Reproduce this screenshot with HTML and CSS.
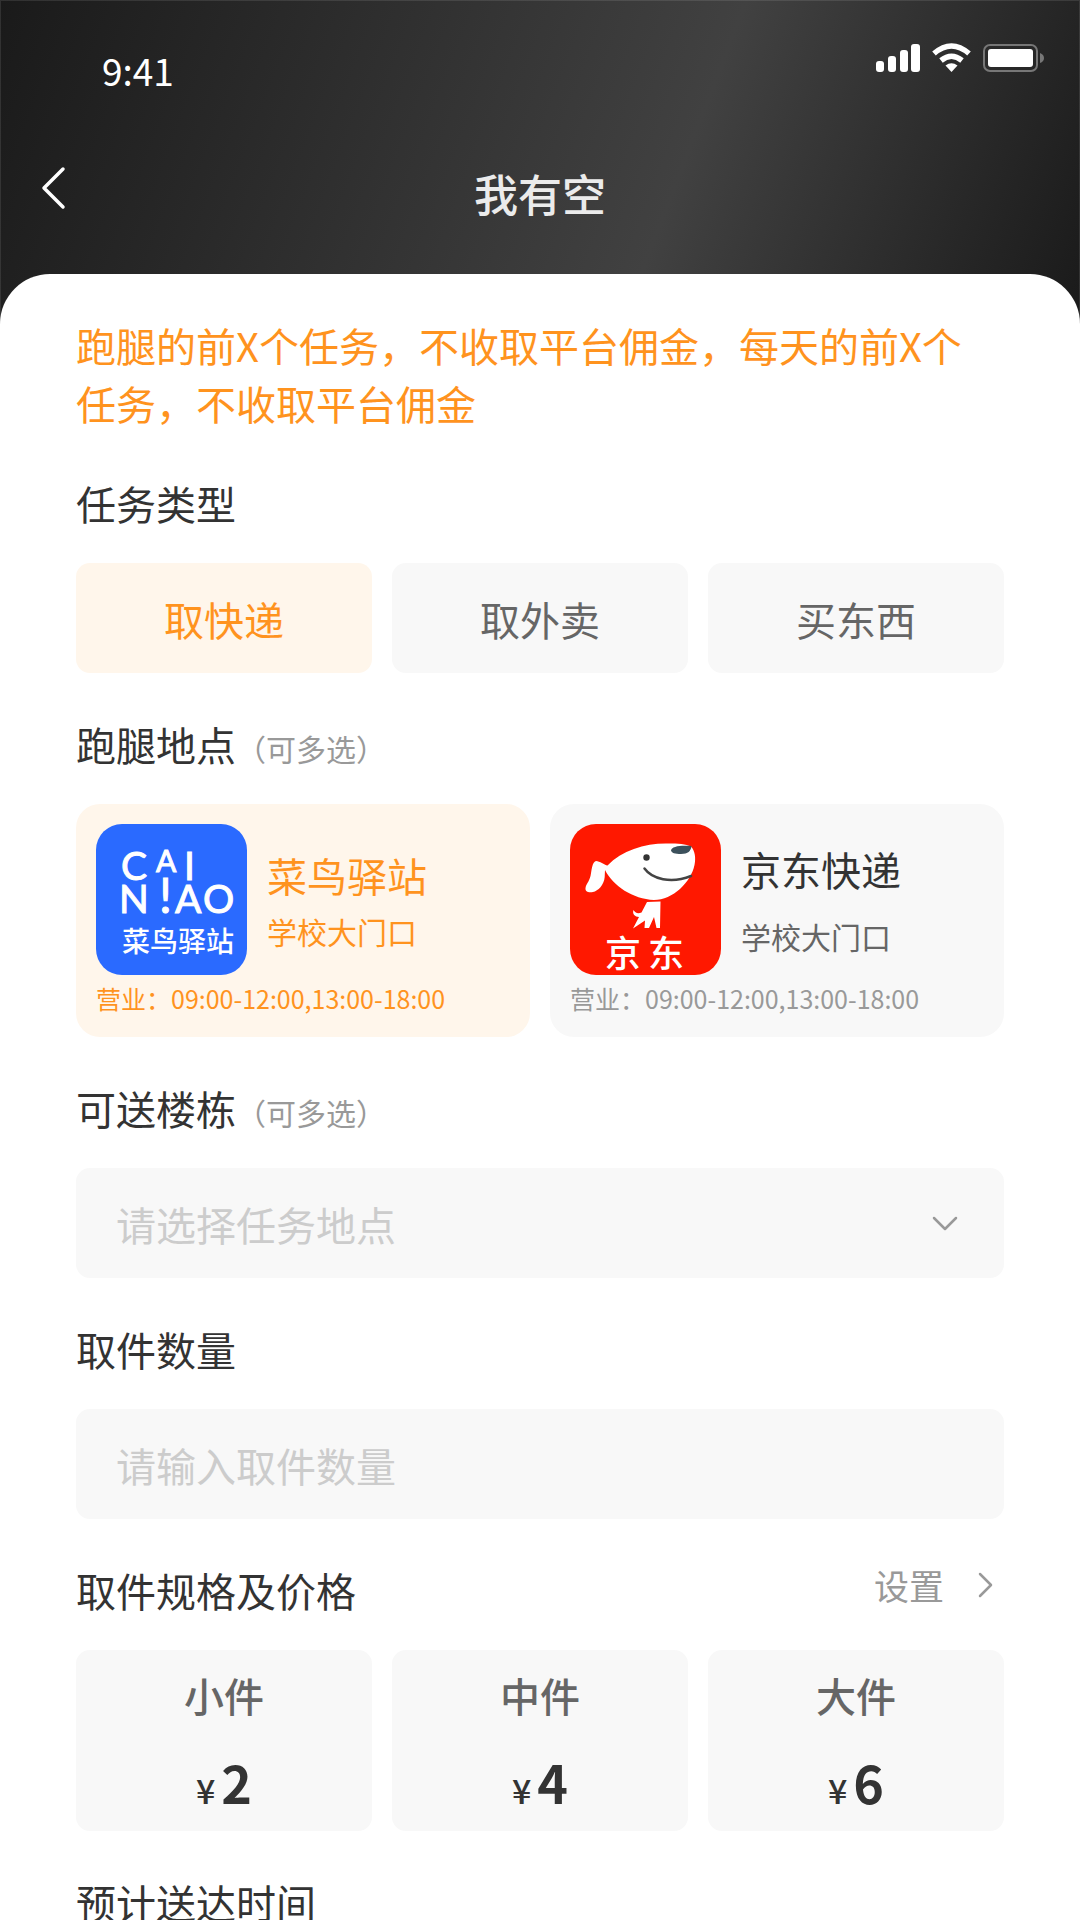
FILE: index.html
```
<!DOCTYPE html>
<html lang="zh-CN">

<head>
    <meta charset="UTF-8">
    <meta name="viewport" content="width=device-width, initial-scale=1">
    <title>我有空</title>
    <link rel="stylesheet" href="styles.css">
</head>

<body>
    <div class="page">
        <header class="header">
            <!-- Status bar -->
            <div class="status-bar">
                <span class="time">9:41</span>
                <svg class="status-icons" viewBox="0 0 176 32" fill="#fff" aria-hidden="true">
                    <rect x="4" y="20" width="8" height="11" rx="3" />
                    <rect x="16" y="15" width="8" height="16" rx="3" />
                    <rect x="28" y="9" width="8" height="22" rx="3" />
                    <rect x="39" y="3" width="9" height="28" rx="3" />
                    <g fill="none" stroke="#fff" stroke-width="5.500">
                        <path d="M62 12.500Q79.500 -2.500 97 12.500" />
                        <path d="M69 19.500Q79.500 11 90 19.500" />
                    </g>
                    <path d="M73.500 24.500Q79.500 20 85.500 24.500L79.500 31Z" />
                    <rect x="112" y="4" width="53" height="26" rx="6" fill="none" stroke="#777" stroke-width="2" />
                    <rect x="116" y="8" width="45" height="18" rx="3" />
                    <path d="M168 12q4 1.500 4 5t-4 5z" fill="#777" />
                </svg>
            </div>

            <!-- Title bar -->
            <nav class="nav">
                <a class="back" href="#" aria-label="返回">
                    <svg viewBox="0 0 50 50" fill="none" stroke="#fff" stroke-width="3.500" stroke-linecap="round" stroke-linejoin="round">
                        <path d="M33 6L14 25L33 44" />
                    </svg>
                </a>
                <h1 class="title">我有空</h1>
            </nav>
        </header>

        <main class="sheet">
            <p class="notice">跑腿的前X个任务，不收取平台佣金，每天的前X个任务，不收取平台佣金</p>

            <!-- Task type -->
            <section class="section" role="radiogroup" aria-labelledby="typeTitle">
                <h2 class="section-title" id="typeTitle">任务类型</h2>
                <div class="options">
                    <label class="option">
                        <input type="radio" name="type" checked>
                        <span>取快递</span>
                    </label>
                    <label class="option">
                        <input type="radio" name="type">
                        <span>取外卖</span>
                    </label>
                    <label class="option">
                        <input type="radio" name="type">
                        <span>买东西</span>
                    </label>
                </div>
            </section>

            <!-- Pick-up stations -->
            <section class="section">
                <h2 class="section-title">跑腿地点<small>（可多选）</small></h2>
                <div class="stations">
                    <label class="station">
                        <input type="checkbox" name="station" checked>
                        <span class="station-main">
                            <svg class="station-logo" viewBox="0 0 151 151" fill="#fff" aria-hidden="true">
                                <rect width="151" height="151" fill="#2a6aff" />
                                <g class="logo-latin">
                                    <text x="25" y="56">C</text>
                                    <text class="logo-small" x="60" y="48">A</text>
                                    <text x="88" y="56">I</text>
                                    <text x="23" y="89">N</text>
                                    <text class="logo-mark" x="63" y="89">!</text>
                                    <text x="79" y="89">A</text>
                                    <text x="107" y="89">O</text>
                                </g>
                                <text class="logo-cn" x="26" y="128">菜鸟驿站</text>
                            </svg>
                            <span class="station-text">
                                <span class="station-name">菜鸟驿站</span>
                                <span class="station-address">学校大门口</span>
                            </span>
                        </span>
                        <span class="station-hours">营业：09:00-12:00,13:00-18:00</span>
                    </label>
                    <label class="station">
                        <input type="checkbox" name="station">
                        <span class="station-main">
                            <svg class="station-logo" viewBox="0 0 151 151" fill="#fff" aria-hidden="true">
                                <rect width="151" height="151" fill="#ff1800" />
                                <path d="M37.500 41.500C52 26 76 19 98 19.500C108 19.500 116 20 121 22.500C125 27 126 34 124.500 41C121 58 103 76 84 76C63 75 43 62 35 46L34.700 53C34 61 28 67 23 68C19 69 15 68 15.500 64C16 60 19 58 20.500 52C21.500 47 22 38 26 37C30 37 34 41 37.500 41.500Z" />
                                <path d="M77 78L90.500 77.500L90 104H86.500L84 93L79 104H74.500L75 96.500L63 104.500L69 93C65 93 62 90 63.500 86C65 89 68 90 71.500 88.500Z" />
                                <circle cx="76.500" cy="33.500" r="3.200" fill="#333" />
                                <path d="M74.500 44.500C82 55 101 60 121 52" fill="none" stroke="#444" stroke-width="2.500" stroke-linecap="round" />
                                <path d="M101 26.500C101 22 112 21 121.500 22C121 27 118 30 111 30C105 30 101.500 29 101 26.500Z" fill="#3c515c" />
                                <text class="logo-jd" x="35" y="143">京</text>
                                <text class="logo-jd" x="78" y="143">东</text>
                            </svg>
                            <span class="station-text">
                                <span class="station-name">京东快递</span>
                                <span class="station-address">学校大门口</span>
                            </span>
                        </span>
                        <span class="station-hours">营业：09:00-12:00,13:00-18:00</span>
                    </label>
                </div>
            </section>

            <!-- Buildings -->
            <section class="section">
                <h2 class="section-title"><label for="building">可送楼栋</label><small>（可多选）</small></h2>
                <div class="select-wrap">
                    <select class="field" id="building">
                        <option value="">请选择任务地点</option>
                    </select>
                    <svg class="select-arrow" viewBox="0 0 26 16" fill="none" stroke="#999" stroke-width="2.500" stroke-linecap="round" stroke-linejoin="round" aria-hidden="true">
                        <path d="M2 2L13 13L24 2" />
                    </svg>
                </div>
            </section>

            <!-- Parcel count -->
            <section class="section">
                <h2 class="section-title"><label for="count">取件数量</label></h2>
                <input class="field" id="count" type="text" inputmode="numeric" placeholder="请输入取件数量">
            </section>

            <!-- Sizes and prices -->
            <section class="section">
                <div class="section-head">
                    <h2 class="section-title">取件规格及价格</h2>
                    <a class="settings" href="#">设置
                        <svg viewBox="0 0 16 26" fill="none" stroke="#999" stroke-width="2.500" stroke-linecap="round" stroke-linejoin="round" aria-hidden="true">
                            <path d="M2 2L13 13L2 24" />
                        </svg>
                    </a>
                </div>
                <div class="options">
                    <div class="price-card">
                        <span class="size">小件</span>
                        <span class="price"><small>¥</small>2</span>
                    </div>
                    <div class="price-card">
                        <span class="size">中件</span>
                        <span class="price"><small>¥</small>4</span>
                    </div>
                    <div class="price-card">
                        <span class="size">大件</span>
                        <span class="price"><small>¥</small>6</span>
                    </div>
                </div>
            </section>

            <section class="section">
                <h2 class="section-title">预计送达时间</h2>
            </section>
        </main>
    </div>
</body>

</html>
```
FILE: styles.css
```
* {
    box-sizing: border-box;
}

body {
    margin: 0;
    font-family: "Noto Sans CJK SC", sans-serif;
    font-size: 40px;
    line-height: 58px;
    color: #333;
    background: #fff;
}

a {
    color: inherit;
    text-decoration: none;
}

.page {
    display: flex;
    flex-direction: column;
    height: 100vh;
}

/* Header */
.header {
    flex: none;
    padding-bottom: 101px;
    background: linear-gradient(111deg, #1a1a1a, #414141 62%, #1a1a1a);
    box-shadow: inset 0 0 0 1px rgba(255, 255, 255, 0.1);
    color: #fff;
}

.status-bar {
    display: flex;
    justify-content: space-between;
    align-items: flex-start;
    padding: 41px 32px 0 102px;
}

.time {
    font-size: 37px;
}

.status-icons {
    width: 176px;
    height: 32px;
}

.nav {
    display: grid;
    grid-template-columns: 1fr auto 1fr;
    align-items: start;
    margin-top: 64px;
    padding: 0 30px;
}

.back svg {
    display: block;
    width: 50px;
    height: 50px;
}

.title {
    margin: 0;
    font-size: 44px;
    font-weight: 500;
    line-height: 60px;
    color: #ebebeb;
}

/* White sheet over the header, scrolls on its own */
.sheet {
    flex: 1;
    min-height: 0;
    margin-top: -50px;
    padding: 42px 76px;
    overflow-y: auto;
    scrollbar-width: none;
    background: #fff;
    border-radius: 50px 50px 0 0;
}

.notice {
    margin: 0;
    padding-right: 16px;
    color: #ff931e;
}

.section {
    margin-top: 42px;
}

.section-title {
    margin: 0 0 31px;
    font-size: 40px;
    font-weight: 400;
}

.section-title small {
    font-size: 30px;
    line-height: 1;
    color: #999;
}

.section-head {
    display: flex;
    justify-content: space-between;
    align-items: flex-start;
}

.settings {
    display: flex;
    align-items: center;
    gap: 34px;
    padding-right: 10px;
    font-size: 35px;
    line-height: 48px;
    color: #999;
}

.settings svg {
    width: 16px;
    height: 26px;
}

/* Task type */
.options {
    display: grid;
    grid-template-columns: repeat(3, 1fr);
    gap: 20px;
}

.option,
.station {
    position: relative;
    background: #f8f8f8;
    cursor: pointer;
}

.option input,
.station input {
    position: absolute;
    opacity: 0;
}

.option {
    padding: 27px 0 25px;
    border-radius: 14px;
    text-align: center;
    color: #666;
}

.option:has(:checked),
.station:has(:checked) {
    background: #fff6eb;
    color: #ff931e;
}

/* Stations */
.stations {
    display: grid;
    grid-template-columns: repeat(2, 1fr);
    gap: 20px;
}

.station {
    padding: 20px;
    border-radius: 24px;
}

.station-main {
    display: flex;
    align-items: center;
    gap: 20px;
}

.station-logo {
    flex: none;
    width: 151px;
    height: 151px;
    border-radius: 26px;
}

.station-text {
    display: flex;
    flex-direction: column;
    gap: 17px;
}

.station-name {
    line-height: 56px;
}

.station-address {
    font-size: 30px;
    line-height: 44px;
    color: #666;
}

.station-hours {
    display: block;
    margin-top: 4px;
    font-size: 25px;
    line-height: 38px;
    color: #999;
}

.station:has(:checked) .station-text {
    gap: 6px;
}

.station:has(:checked) .station-address,
.station:has(:checked) .station-hours {
    color: inherit;
}

.logo-latin {
    font-family: Lato, sans-serif;
    font-size: 39px;
    stroke: #fff;
    stroke-width: 1px;
}

.logo-small {
    font-size: 30px;
}

.logo-mark {
    font-size: 48px;
}

.logo-cn {
    font-size: 28px;
    font-weight: 500;
}

.logo-jd {
    font-size: 36px;
    font-weight: 500;
}

/* Fields */
.field {
    display: block;
    width: 100%;
    height: 110px;
    padding: 2px 40px 0;
    border: none;
    border-radius: 14px;
    outline: none;
    appearance: none;
    font: inherit;
    color: #ccc;
    background: #f8f8f8;
}

.field::placeholder {
    color: #ccc;
}

.select-wrap {
    position: relative;
}

.select-arrow {
    position: absolute;
    top: 48px;
    right: 46px;
    width: 26px;
    height: 16px;
    pointer-events: none;
}

/* Prices */
.price-card {
    display: flex;
    flex-direction: column;
    align-items: center;
    gap: 27px;
    padding: 17px 0;
    border-radius: 14px;
    background: #f8f8f8;
}

.size {
    font-weight: 500;
    line-height: 56px;
    color: #666;
}

.price {
    font-size: 52px;
    font-weight: 700;
    line-height: 64px;
}

.price small {
    margin-right: 6px;
    font-size: 34px;
    font-weight: 500;
    line-height: 1;
}
```
